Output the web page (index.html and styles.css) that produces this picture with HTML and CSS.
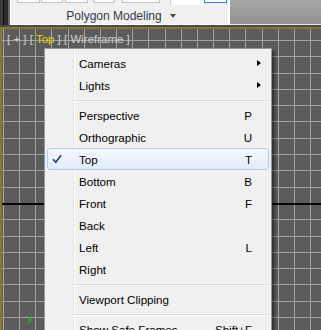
FILE: index.html
```html
<!DOCTYPE html>
<html lang="en">
<head>
    <meta charset="UTF-8">
    <meta name="viewport" content="width=device-width, initial-scale=1.0">
    <title>Viewport Menu</title>
    <link rel="stylesheet" href="styles.css">
</head>
<body>

	<div class="top">
		<div class="frame"></div>
		<div class="ribbon">
			<div class="tools">
				<span class="btn b1"></span>
				<span class="btn b2"></span>
				<span class="btn b3"></span>
				<span class="btn b4"></span>
				<span class="btn b5"></span>
				<span class="blank"></span>
				<span class="btn sel"></span>
			</div>
			<div class="caption">
				<span>Polygon Modeling</span>
				<span class="drop"></span>
			</div>
		</div>
		<div class="gray"></div>
	</div>
	<div class="shade"></div>

	<div class="viewport">
		<div class="label">[ + ] [ <span class="active">Top</span> ] [ Wireframe ]</div>
		<span class="axis">y</span>

		<div class="menu">
			<div class="item"><span class="icon"></span><span class="text">Cameras</span><span class="key"></span><span class="sub"><i class="arrow"></i></span></div>
			<div class="item"><span class="icon"></span><span class="text">Lights</span><span class="key"></span><span class="sub"><i class="arrow"></i></span></div>
			<div class="sep"></div>
			<div class="item"><span class="icon"></span><span class="text">Perspective</span><span class="key">P</span><span class="sub"></span></div>
			<div class="item"><span class="icon"></span><span class="text">Orthographic</span><span class="key">U</span><span class="sub"></span></div>
			<div class="item hover">
				<span class="icon">
					<svg width="10" height="10" viewBox="0 0 10 10"><path d="M1 5.2 L3.8 8.3 L9 1.2" fill="none" stroke="#1f3f8e" stroke-width="1.6"/></svg>
				</span>
				<span class="text">Top</span><span class="key">T</span><span class="sub"></span>
			</div>
			<div class="item"><span class="icon"></span><span class="text">Bottom</span><span class="key">B</span><span class="sub"></span></div>
			<div class="item"><span class="icon"></span><span class="text">Front</span><span class="key">F</span><span class="sub"></span></div>
			<div class="item"><span class="icon"></span><span class="text">Back</span><span class="key"></span><span class="sub"></span></div>
			<div class="item"><span class="icon"></span><span class="text">Left</span><span class="key">L</span><span class="sub"></span></div>
			<div class="item"><span class="icon"></span><span class="text">Right</span><span class="key"></span><span class="sub"></span></div>
			<div class="sep"></div>
			<div class="item"><span class="icon"></span><span class="text">Viewport Clipping</span><span class="key"></span><span class="sub"></span></div>
			<div class="sep"></div>
			<div class="item"><span class="icon"></span><span class="text">Show Safe Frames</span><span class="key">Shift+F</span><span class="sub"></span></div>
		</div>
	</div>

</body>
</html>
```

FILE: styles.css
```css
* {
	box-sizing: border-box;
}
body {
	margin: 0;
	width: 321px;
	height: 330px;
	overflow: hidden;
	display: flex;
	flex-direction: column;
	background-color: #5c5c5c;
	font-family: "Liberation Sans", Arial, sans-serif;
}

/* ribbon strip at the top */
.top {
	display: flex;
	height: 25px;
}
.frame {
	width: 10px;
	background: linear-gradient(to right, #3c3c3c 0 3px, #101010 3px 4px, #2a2a2a 4px 8px, #6a6a6a 8px 10px);
}
.ribbon {
	width: 220px;
	display: flex;
	flex-direction: column;
	background-color: #f0f0f0;
	border-left: 1px solid #ffffff;
	border-right: 2px solid #ffffff;
	border-bottom: 1px solid #ffffff;
}
.tools {
	display: flex;
	height: 4px;
}
.btn {
	height: 3px;
	background-color: #fbfbfb;
	border: 1px solid #c4c4c4;
	border-top: none;
}
.b1 { margin-left: 6px; width: 23px; }
.b2 { margin-left: 1px; width: 22px; }
.b3 { margin-left: 2px; width: 23px; }
.b4 { margin-left: 5px; width: 22px; }
.b5 { margin-left: 7px; width: 38px; }
.blank {
	margin-left: 10px;
	width: 33px;
	height: 5px;
	background-color: #ffffff;
	border-left: 1px solid #cccccc;
}
.btn.sel {
	margin-left: 1px;
	width: 23px;
	background-color: #ffffff;
	border-color: #3d7dcc;
}
.caption {
	flex: 1;
	display: flex;
	align-items: center;
	justify-content: center;
	gap: 8px;
	padding: 3px 0 0 3px;
	font-size: 12px;
	color: #343a48;
}
.drop {
	width: 0;
	height: 0;
	border-top: 4px solid #4a4a4a;
	border-left: 3px solid transparent;
	border-right: 3px solid transparent;
}
.gray {
	flex: 1;
	background: linear-gradient(#a8a8a8, #919191);
	border-bottom: 1px solid #e8e8e8;
}
.shade {
	height: 2px;
	background-color: #4a4a4a;
}

/* viewport with its grid */
.viewport {
	position: relative;
	flex: 1;
	border-top: 2px solid #8a7634;
	border-left: 2px solid #8a7634;
	background-color: #5c5c5c;
	background-image:
		linear-gradient(#050505, #050505),
		repeating-linear-gradient(to right, transparent 0 1px, #a2a2a2 1px 2px, transparent 2px 16.16px),
		repeating-linear-gradient(to bottom, transparent 0 11px, #a2a2a2 11px 12px, transparent 12px 16.3px);
	background-size: 100% 2px, auto, auto;
	background-position: 0 174px, 0 0, 0 0;
	background-repeat: no-repeat, repeat, repeat;
}
.label {
	padding: 4px 0 0 5px;
	font-size: 11.5px;
	line-height: 13px;
	color: #cfcfcf;
	white-space: pre;
}
.label .active {
	color: #f2d000;
}
.axis {
	position: absolute;
	left: 25px;
	top: 283px;
	font-size: 11px;
	color: #2db42d;
}

/* context menu */
.menu {
	position: absolute;
	left: 42px;
	top: 19px;
	width: 228px;
	padding: 3px 2px;
	border: 1px solid #979797;
	background-color: #f0f0f0;
	background-image: linear-gradient(to right, transparent 28px, #e2e3e3 28px 29px, #ffffff 29px 30px, transparent 30px);
	box-shadow: 3px 3px 3px rgba(0, 0, 0, 0.45);
	font-size: 11.6px;
	color: #000000;
}
.item {
	display: flex;
	align-items: center;
	height: 22px;
	border: 1px solid transparent;
	border-radius: 3px;
}
.item.hover {
	border-color: #aed0f2;
	background: linear-gradient(#f4f8fd, #e2edfa);
}
.icon {
	width: 31px;
	display: flex;
	align-items: center;
}
.icon svg {
	margin-left: 4px;
}
.text {
	flex: 1;
}
.sub {
	width: 16px;
	display: flex;
	align-items: center;
}
.arrow {
	margin-left: 5px;
	width: 0;
	height: 0;
	border-left: 4px solid #000000;
	border-top: 3.5px solid transparent;
	border-bottom: 3.5px solid transparent;
}
.sep {
	height: 2px;
	margin: 4px -1px 2px 26px;
	border-top: 1px solid #dcdcdc;
	border-bottom: 1px solid #ffffff;
}
```
